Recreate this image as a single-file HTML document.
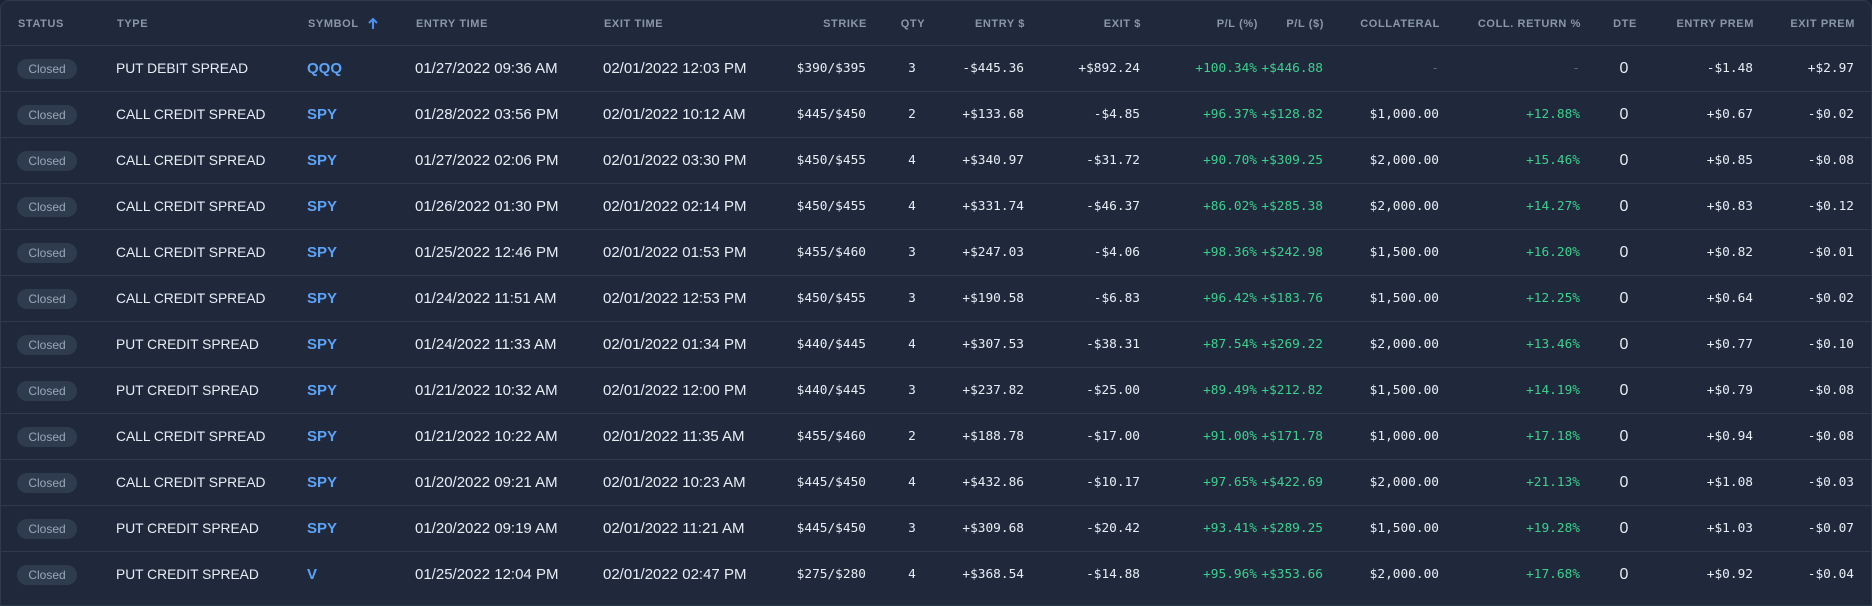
<!DOCTYPE html>
<html><head><meta charset="utf-8">
<style>
*{margin:0;padding:0;box-sizing:border-box}
html,body{width:1872px;height:606px;background:#1b2434;overflow:hidden}
.wrap{position:absolute;left:0;top:0;width:1872px;height:606px;background:#1f293b;border:1px solid #2e3a4e;border-radius:9px 9px 0 0}
.row{position:absolute;left:0;width:1872px;height:46px;border-top:1px solid #2e3a4e}
.hdr{border-top:none;height:45px}
.c{position:absolute;top:0;height:100%;display:flex;align-items:center;white-space:nowrap}
.hdr .c{font:bold 11px "Liberation Sans",sans-serif;color:#8a96aa;letter-spacing:0.6px}
.s{font:15px "Liberation Sans",sans-serif;color:#e8edf5}
.t{font:13.8px "Liberation Sans",sans-serif;color:#e8edf5}
.m{font:12.8px "DejaVu Sans Mono","Liberation Mono",monospace;color:#e8edf5}
.g{color:#3ecf8e}
.d{color:#5d6a80}
.sym{font:bold 15px "Liberation Sans",sans-serif;color:#5ea2f5}
.badge{font:12px "Liberation Sans",sans-serif;color:#9aa6b8;background:#2f3b4f;border-radius:10px;height:20px;width:60px;display:flex;align-items:center;justify-content:center}
.dte{font:16px "Liberation Sans",sans-serif;color:#e8edf5;width:40px;left:1604px;justify-content:center}
</style></head><body><div class="wrap">
<div class="row hdr" style="top:0">
<div class="c" style="left:17px">STATUS</div>
<div class="c" style="left:116px">TYPE</div>
<div class="c" style="left:307px">SYMBOL <svg width="14" height="14" viewBox="0 0 14 14" style="margin-left:7px"><path d="M7 12V2M3 6l4-4 4 4" stroke="#4f8ff0" stroke-width="2" fill="none"/></svg></div>
<div class="c" style="left:415px">ENTRY TIME</div>
<div class="c" style="left:603px">EXIT TIME</div>
<div class="c" style="right:1006px">STRIKE</div>
<div class="c" style="left:890px;width:44px;justify-content:center">QTY</div>
<div class="c" style="right:848px">ENTRY $</div>
<div class="c" style="right:732px">EXIT $</div>
<div class="c" style="right:615px">P/L (%)</div>
<div class="c" style="right:549px">P/L ($)</div>
<div class="c" style="right:433px">COLLATERAL</div>
<div class="c" style="right:292px">COLL. RETURN %</div>
<div class="c" style="left:1604px;width:40px;justify-content:center">DTE</div>
<div class="c" style="right:119px">ENTRY PREM</div>
<div class="c" style="right:18px">EXIT PREM</div>
</div>
</div>
<div style="position:absolute;left:0;top:0;width:1872px">
<div class="row" style="top:45px"><div class="c" style="left:17px"><span class="badge">Closed</span></div><div class="c t" style="left:116px">PUT DEBIT SPREAD</div><div class="c sym" style="left:307px">QQQ</div><div class="c s" style="left:415px">01/27/2022 09:36 AM</div><div class="c s" style="left:603px">02/01/2022 12:03 PM</div><div class="c m" style="right:1006px">$390/$395</div><div class="c m" style="left:890px;width:44px;justify-content:center">3</div><div class="c m" style="right:848px">-$445.36</div><div class="c m" style="right:732px">+$892.24</div><div class="c m g" style="right:615px">+100.34%</div><div class="c m g" style="right:549px">+$446.88</div><div class="c m d" style="right:433px">-</div><div class="c m d" style="right:292px">-</div><div class="c dte">0</div><div class="c m" style="right:119px">-$1.48</div><div class="c m" style="right:18px">+$2.97</div></div>
<div class="row" style="top:91px"><div class="c" style="left:17px"><span class="badge">Closed</span></div><div class="c t" style="left:116px">CALL CREDIT SPREAD</div><div class="c sym" style="left:307px">SPY</div><div class="c s" style="left:415px">01/28/2022 03:56 PM</div><div class="c s" style="left:603px">02/01/2022 10:12 AM</div><div class="c m" style="right:1006px">$445/$450</div><div class="c m" style="left:890px;width:44px;justify-content:center">2</div><div class="c m" style="right:848px">+$133.68</div><div class="c m" style="right:732px">-$4.85</div><div class="c m g" style="right:615px">+96.37%</div><div class="c m g" style="right:549px">+$128.82</div><div class="c m" style="right:433px">$1,000.00</div><div class="c m g" style="right:292px">+12.88%</div><div class="c dte">0</div><div class="c m" style="right:119px">+$0.67</div><div class="c m" style="right:18px">-$0.02</div></div>
<div class="row" style="top:137px"><div class="c" style="left:17px"><span class="badge">Closed</span></div><div class="c t" style="left:116px">CALL CREDIT SPREAD</div><div class="c sym" style="left:307px">SPY</div><div class="c s" style="left:415px">01/27/2022 02:06 PM</div><div class="c s" style="left:603px">02/01/2022 03:30 PM</div><div class="c m" style="right:1006px">$450/$455</div><div class="c m" style="left:890px;width:44px;justify-content:center">4</div><div class="c m" style="right:848px">+$340.97</div><div class="c m" style="right:732px">-$31.72</div><div class="c m g" style="right:615px">+90.70%</div><div class="c m g" style="right:549px">+$309.25</div><div class="c m" style="right:433px">$2,000.00</div><div class="c m g" style="right:292px">+15.46%</div><div class="c dte">0</div><div class="c m" style="right:119px">+$0.85</div><div class="c m" style="right:18px">-$0.08</div></div>
<div class="row" style="top:183px"><div class="c" style="left:17px"><span class="badge">Closed</span></div><div class="c t" style="left:116px">CALL CREDIT SPREAD</div><div class="c sym" style="left:307px">SPY</div><div class="c s" style="left:415px">01/26/2022 01:30 PM</div><div class="c s" style="left:603px">02/01/2022 02:14 PM</div><div class="c m" style="right:1006px">$450/$455</div><div class="c m" style="left:890px;width:44px;justify-content:center">4</div><div class="c m" style="right:848px">+$331.74</div><div class="c m" style="right:732px">-$46.37</div><div class="c m g" style="right:615px">+86.02%</div><div class="c m g" style="right:549px">+$285.38</div><div class="c m" style="right:433px">$2,000.00</div><div class="c m g" style="right:292px">+14.27%</div><div class="c dte">0</div><div class="c m" style="right:119px">+$0.83</div><div class="c m" style="right:18px">-$0.12</div></div>
<div class="row" style="top:229px"><div class="c" style="left:17px"><span class="badge">Closed</span></div><div class="c t" style="left:116px">CALL CREDIT SPREAD</div><div class="c sym" style="left:307px">SPY</div><div class="c s" style="left:415px">01/25/2022 12:46 PM</div><div class="c s" style="left:603px">02/01/2022 01:53 PM</div><div class="c m" style="right:1006px">$455/$460</div><div class="c m" style="left:890px;width:44px;justify-content:center">3</div><div class="c m" style="right:848px">+$247.03</div><div class="c m" style="right:732px">-$4.06</div><div class="c m g" style="right:615px">+98.36%</div><div class="c m g" style="right:549px">+$242.98</div><div class="c m" style="right:433px">$1,500.00</div><div class="c m g" style="right:292px">+16.20%</div><div class="c dte">0</div><div class="c m" style="right:119px">+$0.82</div><div class="c m" style="right:18px">-$0.01</div></div>
<div class="row" style="top:275px"><div class="c" style="left:17px"><span class="badge">Closed</span></div><div class="c t" style="left:116px">CALL CREDIT SPREAD</div><div class="c sym" style="left:307px">SPY</div><div class="c s" style="left:415px">01/24/2022 11:51 AM</div><div class="c s" style="left:603px">02/01/2022 12:53 PM</div><div class="c m" style="right:1006px">$450/$455</div><div class="c m" style="left:890px;width:44px;justify-content:center">3</div><div class="c m" style="right:848px">+$190.58</div><div class="c m" style="right:732px">-$6.83</div><div class="c m g" style="right:615px">+96.42%</div><div class="c m g" style="right:549px">+$183.76</div><div class="c m" style="right:433px">$1,500.00</div><div class="c m g" style="right:292px">+12.25%</div><div class="c dte">0</div><div class="c m" style="right:119px">+$0.64</div><div class="c m" style="right:18px">-$0.02</div></div>
<div class="row" style="top:321px"><div class="c" style="left:17px"><span class="badge">Closed</span></div><div class="c t" style="left:116px">PUT CREDIT SPREAD</div><div class="c sym" style="left:307px">SPY</div><div class="c s" style="left:415px">01/24/2022 11:33 AM</div><div class="c s" style="left:603px">02/01/2022 01:34 PM</div><div class="c m" style="right:1006px">$440/$445</div><div class="c m" style="left:890px;width:44px;justify-content:center">4</div><div class="c m" style="right:848px">+$307.53</div><div class="c m" style="right:732px">-$38.31</div><div class="c m g" style="right:615px">+87.54%</div><div class="c m g" style="right:549px">+$269.22</div><div class="c m" style="right:433px">$2,000.00</div><div class="c m g" style="right:292px">+13.46%</div><div class="c dte">0</div><div class="c m" style="right:119px">+$0.77</div><div class="c m" style="right:18px">-$0.10</div></div>
<div class="row" style="top:367px"><div class="c" style="left:17px"><span class="badge">Closed</span></div><div class="c t" style="left:116px">PUT CREDIT SPREAD</div><div class="c sym" style="left:307px">SPY</div><div class="c s" style="left:415px">01/21/2022 10:32 AM</div><div class="c s" style="left:603px">02/01/2022 12:00 PM</div><div class="c m" style="right:1006px">$440/$445</div><div class="c m" style="left:890px;width:44px;justify-content:center">3</div><div class="c m" style="right:848px">+$237.82</div><div class="c m" style="right:732px">-$25.00</div><div class="c m g" style="right:615px">+89.49%</div><div class="c m g" style="right:549px">+$212.82</div><div class="c m" style="right:433px">$1,500.00</div><div class="c m g" style="right:292px">+14.19%</div><div class="c dte">0</div><div class="c m" style="right:119px">+$0.79</div><div class="c m" style="right:18px">-$0.08</div></div>
<div class="row" style="top:413px"><div class="c" style="left:17px"><span class="badge">Closed</span></div><div class="c t" style="left:116px">CALL CREDIT SPREAD</div><div class="c sym" style="left:307px">SPY</div><div class="c s" style="left:415px">01/21/2022 10:22 AM</div><div class="c s" style="left:603px">02/01/2022 11:35 AM</div><div class="c m" style="right:1006px">$455/$460</div><div class="c m" style="left:890px;width:44px;justify-content:center">2</div><div class="c m" style="right:848px">+$188.78</div><div class="c m" style="right:732px">-$17.00</div><div class="c m g" style="right:615px">+91.00%</div><div class="c m g" style="right:549px">+$171.78</div><div class="c m" style="right:433px">$1,000.00</div><div class="c m g" style="right:292px">+17.18%</div><div class="c dte">0</div><div class="c m" style="right:119px">+$0.94</div><div class="c m" style="right:18px">-$0.08</div></div>
<div class="row" style="top:459px"><div class="c" style="left:17px"><span class="badge">Closed</span></div><div class="c t" style="left:116px">CALL CREDIT SPREAD</div><div class="c sym" style="left:307px">SPY</div><div class="c s" style="left:415px">01/20/2022 09:21 AM</div><div class="c s" style="left:603px">02/01/2022 10:23 AM</div><div class="c m" style="right:1006px">$445/$450</div><div class="c m" style="left:890px;width:44px;justify-content:center">4</div><div class="c m" style="right:848px">+$432.86</div><div class="c m" style="right:732px">-$10.17</div><div class="c m g" style="right:615px">+97.65%</div><div class="c m g" style="right:549px">+$422.69</div><div class="c m" style="right:433px">$2,000.00</div><div class="c m g" style="right:292px">+21.13%</div><div class="c dte">0</div><div class="c m" style="right:119px">+$1.08</div><div class="c m" style="right:18px">-$0.03</div></div>
<div class="row" style="top:505px"><div class="c" style="left:17px"><span class="badge">Closed</span></div><div class="c t" style="left:116px">PUT CREDIT SPREAD</div><div class="c sym" style="left:307px">SPY</div><div class="c s" style="left:415px">01/20/2022 09:19 AM</div><div class="c s" style="left:603px">02/01/2022 11:21 AM</div><div class="c m" style="right:1006px">$445/$450</div><div class="c m" style="left:890px;width:44px;justify-content:center">3</div><div class="c m" style="right:848px">+$309.68</div><div class="c m" style="right:732px">-$20.42</div><div class="c m g" style="right:615px">+93.41%</div><div class="c m g" style="right:549px">+$289.25</div><div class="c m" style="right:433px">$1,500.00</div><div class="c m g" style="right:292px">+19.28%</div><div class="c dte">0</div><div class="c m" style="right:119px">+$1.03</div><div class="c m" style="right:18px">-$0.07</div></div>
<div class="row" style="top:551px"><div class="c" style="left:17px"><span class="badge">Closed</span></div><div class="c t" style="left:116px">PUT CREDIT SPREAD</div><div class="c sym" style="left:307px">V</div><div class="c s" style="left:415px">01/25/2022 12:04 PM</div><div class="c s" style="left:603px">02/01/2022 02:47 PM</div><div class="c m" style="right:1006px">$275/$280</div><div class="c m" style="left:890px;width:44px;justify-content:center">4</div><div class="c m" style="right:848px">+$368.54</div><div class="c m" style="right:732px">-$14.88</div><div class="c m g" style="right:615px">+95.96%</div><div class="c m g" style="right:549px">+$353.66</div><div class="c m" style="right:433px">$2,000.00</div><div class="c m g" style="right:292px">+17.68%</div><div class="c dte">0</div><div class="c m" style="right:119px">+$0.92</div><div class="c m" style="right:18px">-$0.04</div></div>
</div>
</body></html>
